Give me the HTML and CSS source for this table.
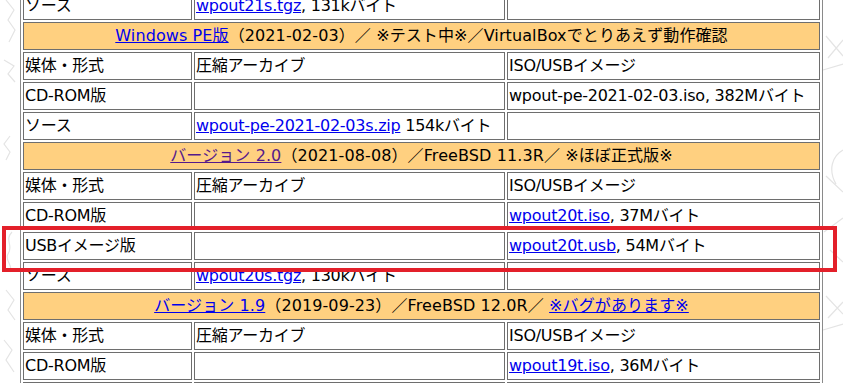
FILE: index.html
```html
<!DOCTYPE html>
<html lang="ja">
<head>
<meta charset="utf-8">
<link rel="stylesheet" href="styles.css">
</head>
<body>
<svg class="deco" width="843" height="383" viewBox="0 0 843 383" aria-hidden="true">
  <g fill="none" stroke="#e4e4e4" stroke-width="1.2">
    <path d="M6 0 L14 10 L8 20 L15 30 L9 42"/>
    <path d="M4 60 L14 66 L8 74 L15 82"/>
    <path d="M10 136 L4 144 L10 152 L6 160"/>
    <path d="M12 232 C4 240 14 246 8 254 C4 260 14 266 10 272"/>
    <path d="M6 290 L14 300 L8 310 L15 320"/>
    <path d="M4 340 L12 350 L6 360 L14 372"/>
    <path d="M826 36 L843 56 M828 58 L843 40 M823 70 L843 64"/>
    <path d="M843 150 C832 156 828 170 836 184 M826 176 L843 192"/>
    <path d="M824 232 L843 218 M830 250 L843 262"/>
    <path d="M826 296 L843 314 M828 318 L843 302 M823 330 L843 324"/>
  </g>
</svg>
<div class="page">
<table class="dl">
<colgroup><col class="c1"><col class="c2"><col class="c3"></colgroup>
<tr><td>ソース</td><td><a href="#">wpout21s.tgz</a>, 131kバイト</td><td></td></tr>
<tr class="ver"><td colspan="3"><a href="#">Windows PE版</a>（2021-02-03）／ ※テスト中※／VirtualBoxでとりあえず動作確認</td></tr>
<tr><td>媒体・形式</td><td>圧縮アーカイブ</td><td>ISO/USBイメージ</td></tr>
<tr><td>CD-ROM版</td><td></td><td>wpout-pe-2021-02-03.iso, 382Mバイト</td></tr>
<tr><td>ソース</td><td><a href="#">wpout-pe-2021-02-03s.zip</a> 154kバイト</td><td></td></tr>
<tr class="ver"><td colspan="3"><a href="#" class="visited">バージョン 2.0</a>（2021-08-08）／FreeBSD 11.3R／ ※ほぼ正式版※</td></tr>
<tr><td>媒体・形式</td><td>圧縮アーカイブ</td><td>ISO/USBイメージ</td></tr>
<tr><td>CD-ROM版</td><td></td><td><a href="#">wpout20t.iso</a>, 37Mバイト</td></tr>
<tr><td>USBイメージ版</td><td></td><td><a href="#">wpout20t.usb</a>, 54Mバイト</td></tr>
<tr><td>ソース</td><td><a href="#">wpout20s.tgz</a>, 130kバイト</td><td></td></tr>
<tr class="ver"><td colspan="3"><a href="#">バージョン 1.9</a>（2019-09-23）／FreeBSD 12.0R／ <a href="#">※バグがあります※</a></td></tr>
<tr><td>媒体・形式</td><td>圧縮アーカイブ</td><td>ISO/USBイメージ</td></tr>
<tr><td>CD-ROM版</td><td></td><td><a href="#">wpout19t.iso</a>, 36Mバイト</td></tr>
<tr><td>USBイメージ版</td><td></td><td><a href="#">wpout19t.usb</a>, 52Mバイト</td></tr>
</table>
</div>
<div class="mark"></div>
</body>
</html>
```
FILE: styles.css
```css
html, body {
  margin: 0;
  padding: 0;
  background: #fff;
  height: 383px;
  overflow: hidden;
}
.deco {
  position: absolute;
  left: 0;
  top: 0;
  z-index: 0;
}
.page {
  position: relative;
  z-index: 1;
  padding-left: 20px;
  margin-top: -11px;
}
.dl {
  table-layout: fixed;
  width: 803px;
  border: 1px solid #8a8a8a;
  border-spacing: 2px;
  background: #fff;
  font-family: "DejaVu Sans", "Noto Sans CJK JP", sans-serif;
  font-size: 16px;
  letter-spacing: -0.25px;
  color: #000;
}
.c1 { width: 169px; }
.c2 { width: 311px; }
.c3 { width: 313px; }
.dl td {
  box-sizing: border-box;
  border: 1px solid #6e6e6e;
  padding: 1px 1px;
  height: 28px;
  line-height: 24px;
  white-space: nowrap;
  overflow: hidden;
}
.ver td {
  background: #ffd080;
  text-align: center;
  letter-spacing: 0.1px;
}
.dl a { color: #0000ee; text-decoration: underline; }
.dl a.visited { color: #551a8b; }
.mark {
  position: absolute;
  z-index: 2;
  left: 2px;
  top: 226px;
  width: 827px;
  height: 38px;
  border: 4px solid #e3202a;
}
```
